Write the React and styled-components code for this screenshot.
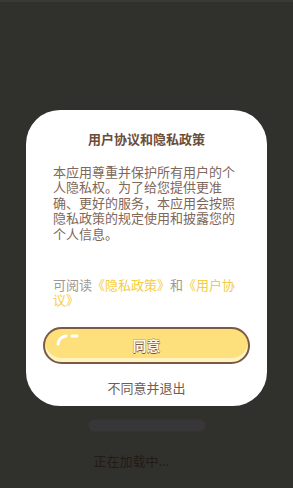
import React from 'react';
import styled, { createGlobalStyle } from 'styled-components';

const Global = createGlobalStyle`
  html, body {
    margin: 0;
    padding: 0;
    background: #30312c;
    font-family: "Noto Sans CJK SC", "Noto Sans", sans-serif;
  }
  #root { height: 488px; }
`;

const Screen = styled.div`
  position: relative;
  height: 488px;
  overflow: hidden;
  background: #30312c;
  border-top: 2px solid #393a36;
  box-sizing: border-box;
  display: flex;
  flex-direction: column;
  align-items: center;
  padding-top: 417px;
`;

const LoadBar = styled.div`
  width: 118px;
  height: 13px;
  box-sizing: border-box;
  border-radius: 7px;
  background: #37373a;
  border: 1px solid #3b302d;
`;

const LoadText = styled.div`
  margin-top: 21px;
  margin-left: -30px;
  font-size: 13px;
  line-height: 16px;
  color: #231b17;
`;

const Overlay = styled.div`
  position: absolute;
  inset: 0;
  display: flex;
  justify-content: center;
  align-items: flex-start;
  padding-top: 108px;
`;

const Card = styled.div`
  width: 241px;
  height: 296px;
  box-sizing: border-box;
  background: #ffffff;
  border-radius: 34px;
  padding: 21px 27px 0;
  display: flex;
  flex-direction: column;
`;

const Title = styled.div`
  text-align: center;
  font-size: 13px;
  font-weight: 700;
  line-height: 16px;
  color: #6b4d3b;
`;

const Body = styled.p`
  margin: 17px 0 0;
  font-size: 13px;
  line-height: 15.4px;
  color: #80675a;
`;

const Notice = styled.p`
  margin: 36px 0 0;
  font-size: 13px;
  line-height: 15px;
  color: #a2978f;
`;

const Link = styled.span`
  color: #f5cd3f;
`;

const AgreeButton = styled.button`
  position: relative;
  margin: 20px -10px 0;
  height: 37px;
  box-sizing: border-box;
  border: 2px solid #7a5a45;
  border-radius: 19px;
  background: #fde07b;
  box-shadow: inset 0 -4px 0 #fff3c2;
  font-family: inherit;
  font-size: 14px;
  font-weight: 700;
  color: #fff8e6;
  -webkit-text-stroke: 0.6px #7a5a45;
  paint-order: stroke fill;
  text-shadow: 0 1px 0 #7a5a45;
  padding: 0 0 2px;
`;

const Shine = styled.svg`
  position: absolute;
  left: 8px;
  top: 3px;
`;

const Decline = styled.div`
  margin-top: 16px;
  text-align: center;
  font-size: 13px;
  line-height: 16px;
  color: #6f5d52;
`;

export default function App() {
  return (
    <>
      <Global />
      <Screen>
        <LoadBar />
        <LoadText>正在加载中...</LoadText>
        <Overlay>
          <Card>
            <Title>用户协议和隐私政策</Title>
            <Body>
              本应用尊重并保护所有用户的个人隐私权。为了给您提供更准确、更好的服务，本应用会按照隐私政策的规定使用和披露您的个人信息。
            </Body>
            <Notice>
              可阅读<Link>《隐私政策》</Link>和<Link>《用户协议》</Link>
            </Notice>
            <AgreeButton>
              <Shine width="30" height="14" viewBox="0 0 30 14">
                <path d="M5 12 Q6 5 13 4" stroke="#ffffff" strokeWidth="3" strokeLinecap="round" fill="none" />
                <path d="M19 4 L24 4" stroke="#ffffff" strokeWidth="3" strokeLinecap="round" />
              </Shine>
              同意
            </AgreeButton>
            <Decline>不同意并退出</Decline>
          </Card>
        </Overlay>
      </Screen>
    </>
  );
}
